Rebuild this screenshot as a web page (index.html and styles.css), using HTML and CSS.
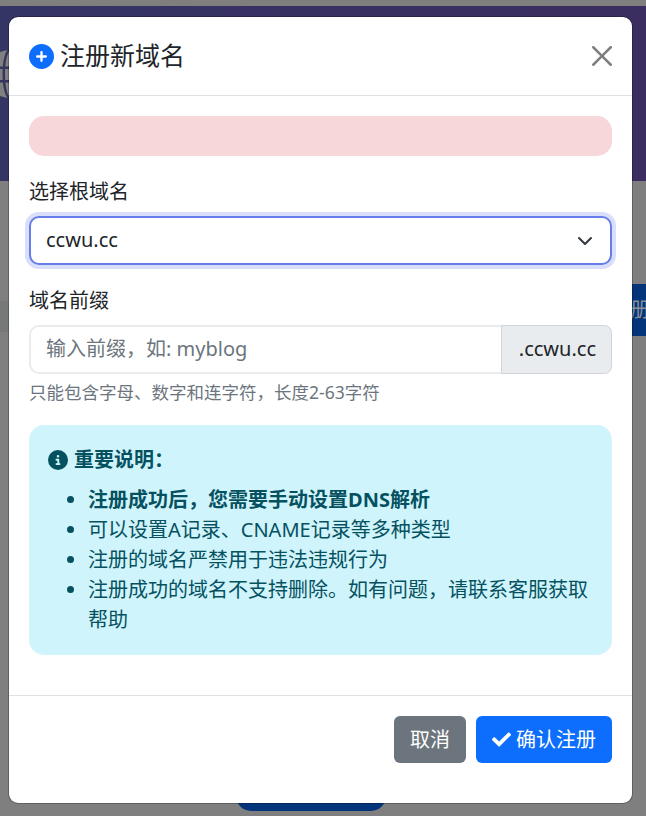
FILE: index.html
```html
<!DOCTYPE html>
<html lang="zh-CN">
<head>
<meta charset="utf-8">
<title>注册新域名</title>
<link rel="stylesheet" href="styles.css">
</head>
<body>
<div class="page">
  <header class="hero">
    <svg class="globe" viewBox="0 0 100 100" aria-hidden="true"><circle cx="50" cy="50" r="50" fill="#808080"/><g fill="none" stroke="#35355f" stroke-width="5"><ellipse cx="50" cy="50" rx="13" ry="50"/><path d="M0 37h100M0 65h100"/></g></svg>
  </header>
  <div class="search-row">
    <div class="search-input"></div>
    <div class="search-button">注册</div>
  </div>
  <div class="bottom-pill"></div>
</div>

<div class="modal" role="dialog" aria-modal="true">
  <div class="modal-header">
    <h5 class="modal-title">
      <svg class="title-icon" viewBox="0 0 512 512" aria-hidden="true"><path d="M256 512A256 256 0 1 0 256 0a256 256 0 1 0 0 512zM232 344V280H168c-13.300 0-24-10.700-24-24s10.700-24 24-24h64V168c0-13.300 10.700-24 24-24s24 10.700 24 24v64h64c13.300 0 24 10.700 24 24s-10.700 24-24 24H280v64c0 13.300-10.700 24-24 24s-24-10.700-24-24z"/></svg>
      <span class="title-text">注册新域名</span>
    </h5>
    <button class="close" type="button" aria-label="关闭">
      <svg viewBox="0 0 16 16" aria-hidden="true"><path d="M.293.293a1 1 0 0 1 1.414 0L8 6.586 14.293.293a1 1 0 1 1 1.414 1.414L9.414 8l6.293 6.293a1 1 0 0 1-1.414 1.414L8 9.414l-6.293 6.293a1 1 0 0 1-1.414-1.414L6.586 8 .293 1.707a1 1 0 0 1 0-1.414z"/></svg>
    </button>
  </div>
  <div class="modal-body">
    <div class="alert-danger"></div>
    <div class="field">
      <label class="label">选择根域名</label>
      <div class="select">
        <span class="select-value">ccwu.cc</span>
        <svg class="chevron" viewBox="0 0 16 16" aria-hidden="true"><path fill="none" stroke="#343a40" stroke-linecap="round" stroke-linejoin="round" stroke-width="2" d="m2 5 6 6 6-6"/></svg>
      </div>
    </div>
    <div class="field">
      <label class="label">域名前缀</label>
      <div class="input-group">
        <div class="input">输入前缀，如: myblog</div>
        <div class="addon">.ccwu.cc</div>
      </div>
      <div class="help">只能包含字母、数字和连字符，长度2-63字符</div>
    </div>
    <div class="alert-info">
      <div class="info-head">
        <svg class="info-icon" viewBox="0 0 512 512" aria-hidden="true"><path d="M256 512A256 256 0 1 0 256 0a256 256 0 1 0 0 512zM216 336h24V272H216c-13.300 0-24-10.700-24-24s10.700-24 24-24h48c13.300 0 24 10.700 24 24v88h8c13.300 0 24 10.700 24 24s-10.700 24-24 24H216c-13.300 0-24-10.700-24-24s10.700-24 24-24zm40-208a32 32 0 1 1 0 64 32 32 0 1 1 0-64z"/></svg>
        <strong>重要说明：</strong>
      </div>
      <ul class="info-list">
        <li><strong>注册成功后，您需要手动设置DNS解析</strong></li>
        <li>可以设置A记录、CNAME记录等多种类型</li>
        <li>注册的域名严禁用于违法违规行为</li>
        <li>注册成功的域名不支持删除。如有问题，请联系客服获取帮助</li>
      </ul>
    </div>
  </div>
  <div class="modal-footer">
    <button class="btn btn-secondary" type="button">取消</button>
    <button class="btn btn-primary" type="button">
      <svg class="check" viewBox="0 0 512 512" aria-hidden="true"><path d="M173.898 439.404l-166.400-166.400c-9.997-9.997-9.997-26.206 0-36.204l36.203-36.204c9.997-9.998 26.207-9.998 36.204 0L192 312.690 432.095 72.596c9.997-9.997 26.207-9.997 36.204 0l36.203 36.204c9.997 9.997 9.997 26.206 0 36.204l-294.400 294.401c-9.998 9.997-26.207 9.997-36.204-.001z"/></svg>
      确认注册
    </button>
  </div>
</div>
</body>
</html>
```

FILE: styles.css
```css
* { box-sizing: border-box; }

html, body {
  margin: 0;
  height: 816px;
  overflow: hidden;
}

body {
  font-family: "Noto Sans", "Noto Sans CJK SC", sans-serif;
  font-size: 20px;
  line-height: 1.5;
  color: #212529;
  background: #7f7f7f;
}

/* Page behind the backdrop */
.page {
  height: 816px;
  padding-top: 6px;
  display: flex;
  flex-direction: column;
  overflow: hidden;
}

.hero {
  position: relative;
  height: 175px;
  flex: none;
  background: linear-gradient(90deg, #343564, #3b2d5f);
  overflow: hidden;
}

.globe {
  position: absolute;
  left: -14px;
  top: 44px;
  width: 48px;
  height: 48px;
}

.search-row {
  display: flex;
  justify-content: flex-end;
  height: 52px;
  margin-top: 103px;
  margin-right: -40px;
}

.search-input {
  flex: 1;
  height: 31px;
  margin-top: 17px;
  background: #777879;
}

.search-button {
  width: 80px;
  padding-left: 4px;
  background: #043479;
  color: #8a8f98;
  line-height: 52px;
  font-size: 20px;
  white-space: nowrap;
}

.bottom-pill {
  width: 150px;
  height: 30px;
  margin: 445px 0 0 236px;
  background: #043479;
  border-radius: 24px;
  flex: none;
}

/* Modal */
.modal {
  position: absolute;
  left: 8px;
  top: 16px;
  width: 625px;
  height: 788px;
  display: flex;
  flex-direction: column;
  background: #fff;
  border: 1px solid rgba(0, 0, 0, .25);
  background-clip: padding-box;
  border-radius: 10px;
}

.modal-header {
  flex: none;
  height: 79px;
  padding: 0 20px;
  display: flex;
  align-items: center;
  justify-content: space-between;
  border-bottom: 1px solid #dee2e6;
}

.modal-title {
  margin: 0;
  display: flex;
  align-items: center;
  gap: 6px;
  font-size: 25px;
  font-weight: 400;
  line-height: 1.2;
}

.title-text { padding-bottom: 2px; }

.title-icon {
  width: 25px;
  height: 25px;
  fill: #0d6efd;
}

.close {
  width: 20px;
  height: 20px;
  padding: 0;
  display: block;
  border: 0;
  background: none;
}

.close svg {
  display: block;
  width: 20px;
  height: 20px;
  fill: #7e7e7e;
}

.modal-body {
  flex: 1;
  padding: 20px 20px 0;
}

.alert-danger {
  height: 40px;
  margin-bottom: 20px;
  background: #f8d7da;
  border-radius: 15px;
}

.field { margin-bottom: 20px; }

.label {
  display: block;
  padding-top: 1px;
  margin-bottom: 9px;
}

.select {
  height: 49px;
  padding: 0 17px 0 15px;
  display: flex;
  align-items: center;
  justify-content: space-between;
  border: 2px solid #667eea;
  border-radius: 10px;
  box-shadow: 0 0 0 4px rgba(102, 126, 234, .25);
  background: #fff;
}

.select-value { padding-bottom: 2px; }

.chevron {
  width: 16px;
  height: 16px;
}

.input-group { display: flex; }

.input {
  flex: 1;
  height: 49px;
  padding: 0 15px 2px;
  display: flex;
  align-items: center;
  color: #6c757d;
  border: 2px solid #e9ecef;
  border-right: 0;
  border-radius: 10px 0 0 10px;
}

.addon {
  height: 49px;
  padding: 0 15px 2px 16.5px;
  display: flex;
  align-items: center;
  background: #e9ecef;
  border: 1px solid #ced4da;
  border-radius: 0 7.5px 7.5px 0;
}

.help {
  margin-top: 5px;
  font-size: 17.5px;
  color: #6c757d;
}

.alert-info {
  height: 230px;
  padding: 20px 20px 20px 19px;
  color: #055160;
  background: #cff4fc;
  border-radius: 15px;
}

.info-head {
  display: flex;
  align-items: center;
  gap: 6px;
}

.info-icon {
  width: 20px;
  height: 20px;
  fill: #055160;
}

.info-list {
  margin: 10px 0 0;
  padding-left: 40px;
}

.modal-footer {
  flex: none;
  padding: 20px 20px 40px;
  display: flex;
  justify-content: flex-end;
  gap: 10px;
  border-top: 1px solid #dee2e6;
}

.btn {
  height: 47px;
  padding: 0 15px;
  display: flex;
  align-items: center;
  gap: 5px;
  font: inherit;
  color: #fff;
  border: 1px solid transparent;
  border-radius: 6px;
}

.btn-secondary { background: #6c757d; }
.btn-primary { background: #0d6efd; }

.check {
  width: 19px;
  height: 19px;
  fill: #fff;
}
```
